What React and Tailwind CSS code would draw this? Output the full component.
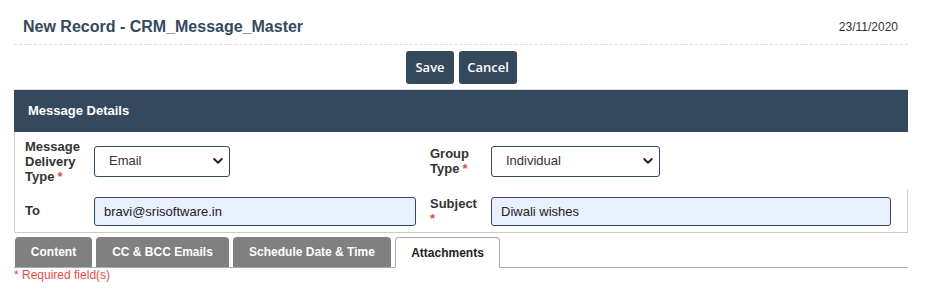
import React from 'react'

// Chevron used by the select boxes
function Chevron() {
  return (
    <svg width="10" height="7" viewBox="0 0 10 7" className="pointer-events-none absolute right-[7px] top-1/2 -translate-y-1/2">
      <path d="M1.2 1.5 L5 5.2 L8.8 1.5" fill="none" stroke="#222" strokeWidth="1.9" strokeLinecap="round" strokeLinejoin="round" />
    </svg>
  )
}

function Select({ value, width }) {
  return (
    <div className={`relative ${width}`}>
      <select
        defaultValue={value}
        className="h-[31px] w-full appearance-none rounded-[3px] border border-[#34495e] bg-white pl-[14px] text-[13px] text-[#333] outline-none"
      >
        <option>{value}</option>
      </select>
      <Chevron />
    </div>
  )
}

const tabs = [
  { label: 'Content', width: 'w-[77px]' },
  { label: 'CC & BCC Emails', width: 'w-[133px]' },
  { label: 'Schedule Date & Time', width: 'w-[158px]' },
]

export default function App() {
  return (
    <div className="min-h-[299px] bg-white pl-[14px] pr-[18px] font-['Liberation_Sans',Arial,sans-serif] text-[#333]">
      {/* Page header */}
      <div className="flex h-[45px] items-center justify-between border-b border-dashed border-[#ddd] pl-[9px] pr-[10px] pt-[10px]">
        <h1 className="text-[16px] font-bold text-[#34495e]">New Record - CRM_Message_Master</h1>
        <span className="text-[12px] text-[#333]">23/11/2020</span>
      </div>

      {/* Actions */}
      <div className="mt-[6px] mb-[5px] flex justify-center gap-[5px] pl-[1px]">
        <button className="h-[33px] w-[48px] rounded-[3px] bg-[#34495e] font-['Open_Sans',sans-serif] text-[13px] font-semibold text-white">
          Save
        </button>
        <button className="h-[33px] w-[58px] rounded-[3px] bg-[#34495e] font-['Open_Sans',sans-serif] text-[13px] font-semibold text-white">
          Cancel
        </button>
      </div>

      {/* Panel */}
      <div className="border-t border-[#ddd]">
        <div className="flex h-[42px] items-center bg-[#34495e] pl-[14px] text-[13px] font-bold text-white">
          Message Details
        </div>
        <div className="border-b border-l border-[#ccc]">
          <div className="grid h-[52px] grid-cols-[79px_322px_75px_1fr] items-center pt-[6px]">
            <div className="flex flex-col pl-[10px] text-[13px] font-bold leading-[15px]">
              <span>Message</span>
              <span>Delivery</span>
              <span className="flex gap-[3px]">
                <span>Type</span>
                <span className="text-[#e74c3c]">*</span>
              </span>
            </div>
            <Select value="Email" width="w-[136px]" />
            <div className="flex flex-col pl-[14px] text-[13px] font-bold leading-[15px]">
              <span>Group</span>
              <span className="flex gap-[3px]">
                <span>Type</span>
                <span className="text-[#e74c3c]">*</span>
              </span>
            </div>
            <Select value="Individual" width="w-[169px]" />
          </div>
          <div className="mt-[6px] grid grid-cols-[79px_322px_75px_1fr] items-center border-r border-[#ccc] pb-[6px] pt-[6px]">
            <label className="pl-[10px] text-[13px] font-bold">To</label>
            <input
              defaultValue="bravi@srisoftware.in"
              className="h-[29px] w-full rounded-[3px] border border-[#34495e] bg-[#e8f0fe] pl-[9px] text-[13px] text-[#222] outline-none"
            />
            <div className="flex flex-col pl-[14px] text-[13px] font-bold leading-[15px]">
              <span>Subject</span>
              <span className="text-[#e74c3c]">*</span>
            </div>
            <div className="pr-[16px]">
              <input
                defaultValue="Diwali wishes"
                className="h-[29px] w-full rounded-[3px] border border-[#34495e] bg-[#e8f0fe] pl-[9px] text-[13px] text-[#222] outline-none"
              />
            </div>
          </div>
        </div>
      </div>

      {/* Tabs */}
      <div className="mt-[4px] flex gap-[4px] border-b border-[#aaa] pl-[1px]">
        {tabs.map((t) => (
          <div
            key={t.label}
            className={`${t.width} flex h-[30px] items-center justify-center rounded-t-[4px] bg-[#808080] text-[12px] font-bold text-white`}
          >
            {t.label}
          </div>
        ))}
        <div className="-mb-px flex h-[31px] w-[105px] items-center justify-center rounded-t-[4px] border border-b-white border-[#aaa] bg-white text-[12px] font-bold text-[#222]">
          Attachments
        </div>
      </div>
      <div className="text-[12px] leading-[14px] text-[#e74c3c]">* Required field(s)</div>
    </div>
  )
}
